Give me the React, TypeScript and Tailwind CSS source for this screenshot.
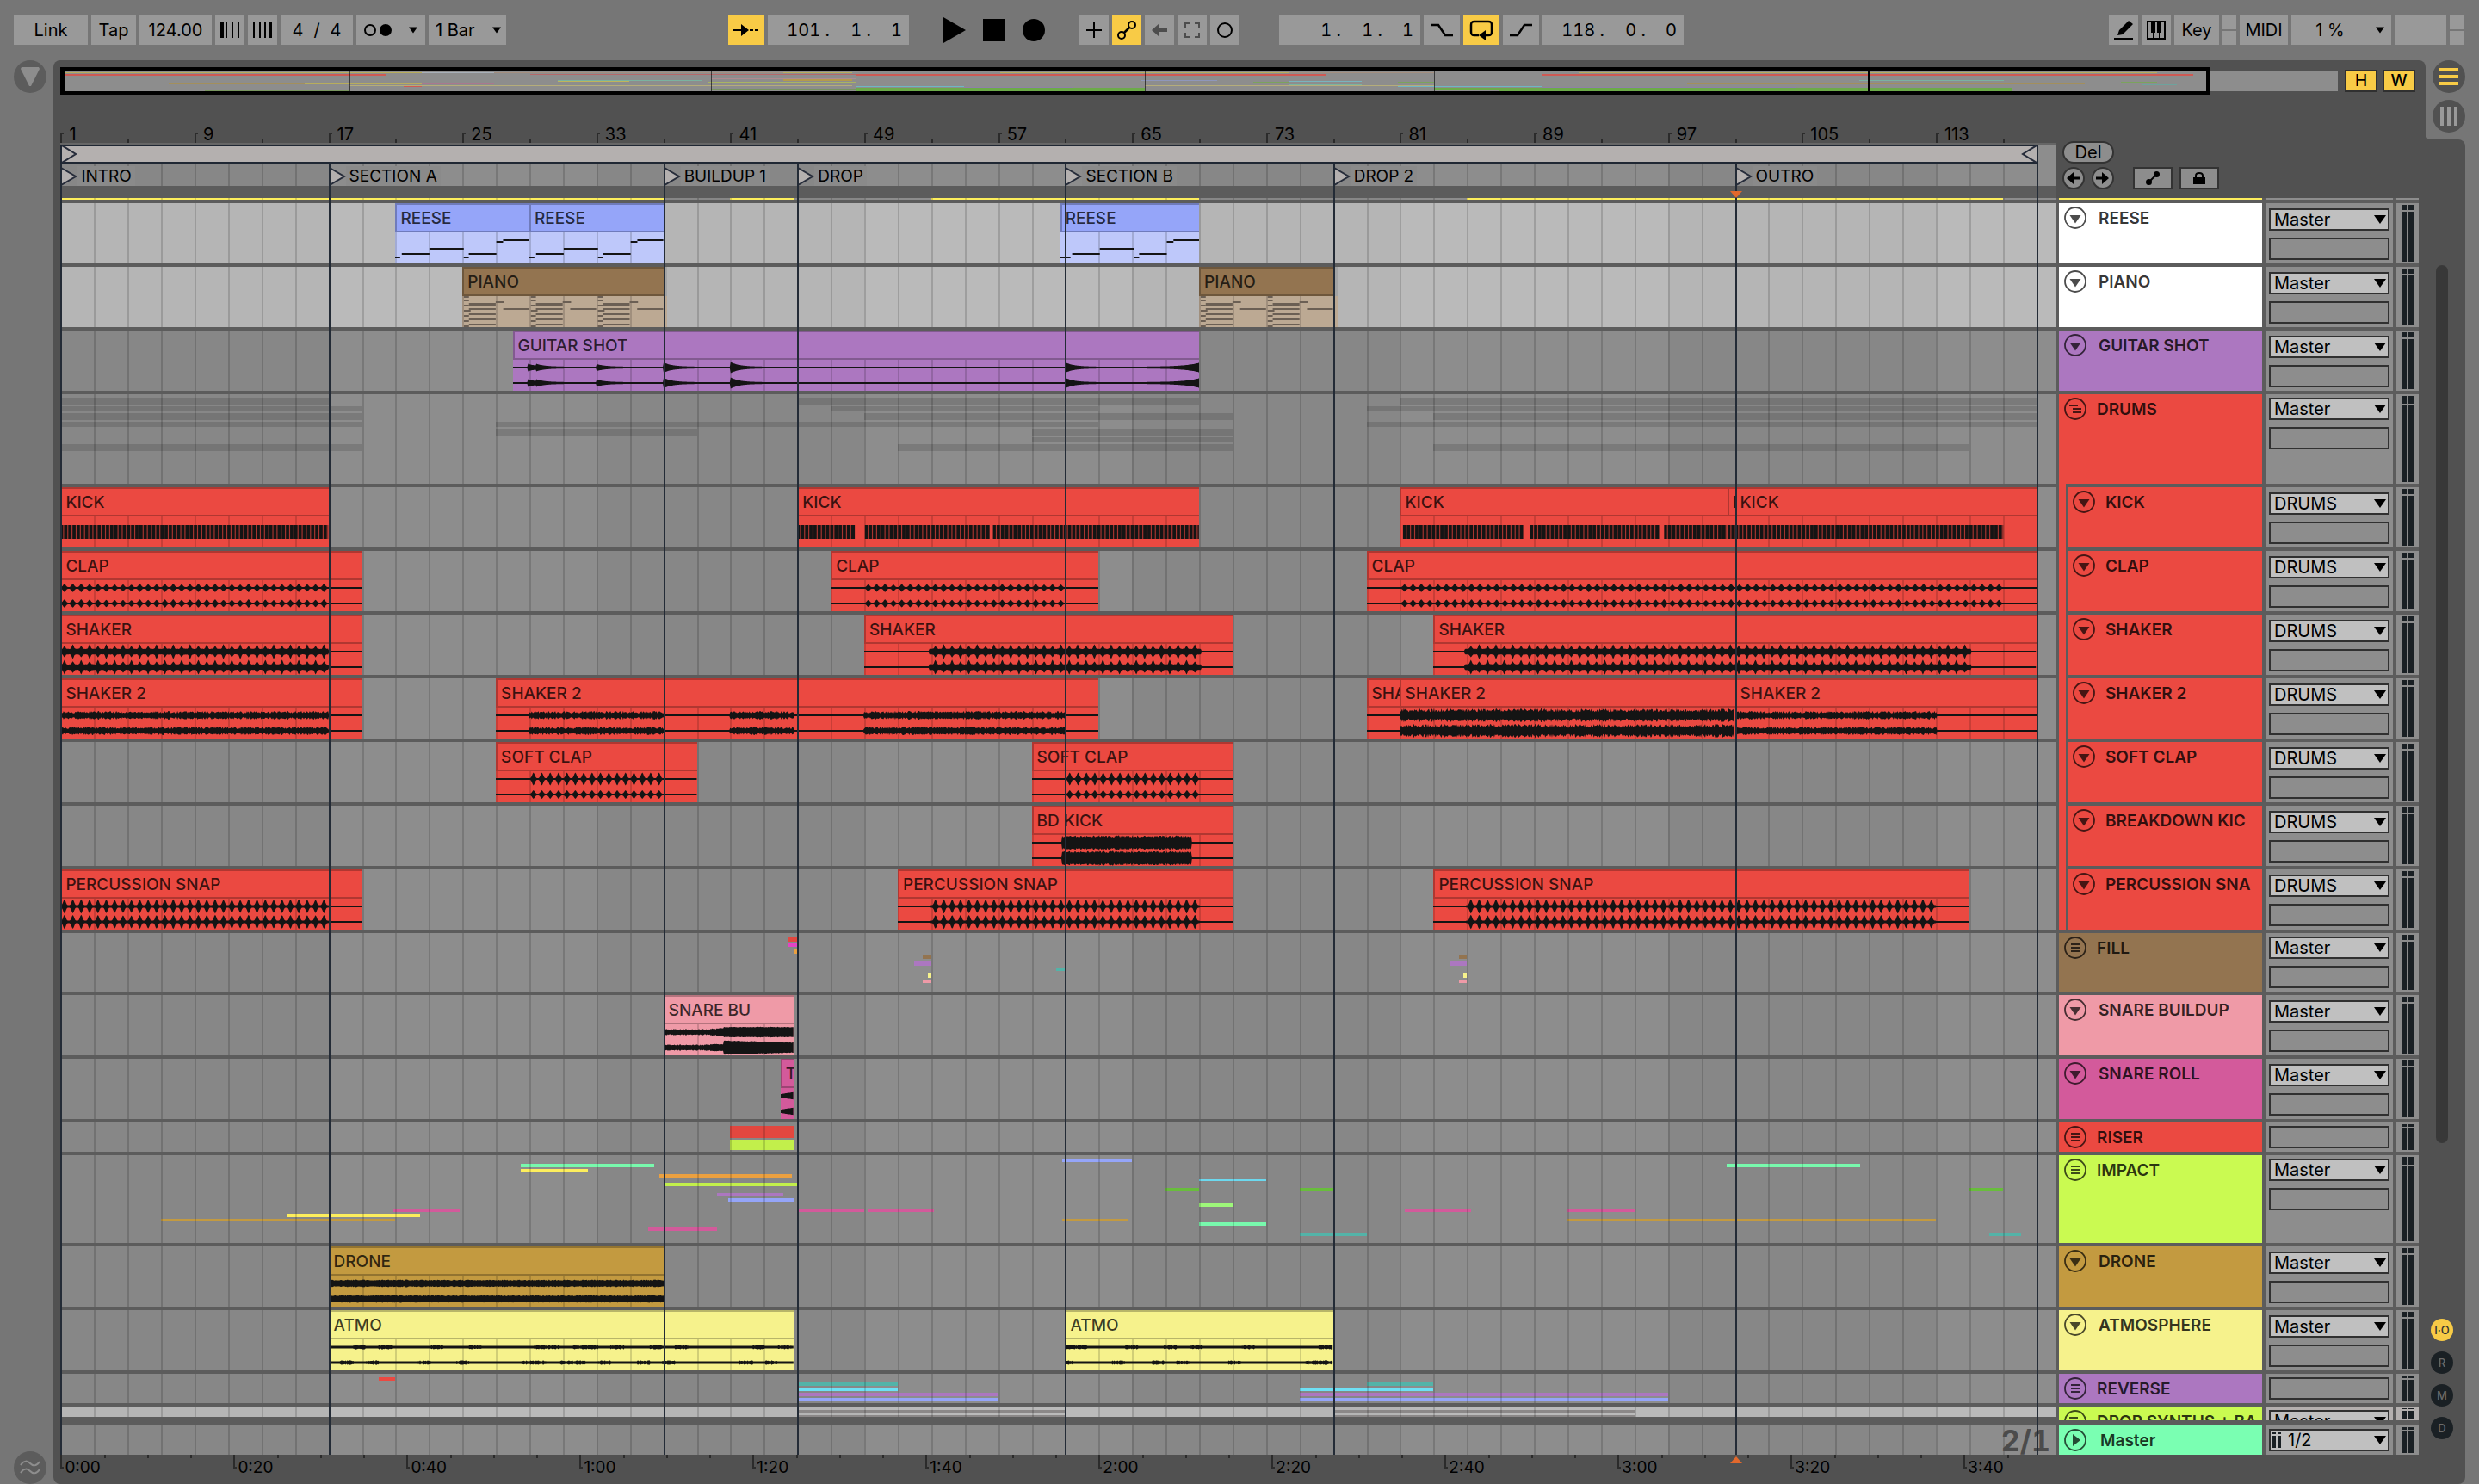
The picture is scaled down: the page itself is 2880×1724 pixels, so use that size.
import { useState } from 'react';
import type { ReactNode } from 'react';
import clsx from 'clsx';

// Timeline maths: everything on the arrangement is placed in bars.
const VIEW_START = 0.98;
const VIEW_BARS = 119.17;
const GRID = Array.from({ length: 59 }, (_, i) => 1 + (i + 1) * 2);
const SHADES = [17, 49, 81, 113];

const pos = (bar: number) => `${((bar - VIEW_START) / VIEW_BARS) * 100}%`;
const len = (bars: number) => `${(bars / VIEW_BARS) * 100}%`;

type WaveKind =
  | 'kick'
  | 'clap'
  | 'shaker'
  | 'hat'
  | 'hatLoud'
  | 'soft'
  | 'bd'
  | 'snap'
  | 'build'
  | 'roll'
  | 'drone'
  | 'atmo'
  | 'guitar';

type ClipData = {
  name: string;
  from: number;
  to: number;
  kind?: WaveKind;
  waves?: [number, number][];
  notes?: 'reese' | 'piano';
  shift?: number;
};

type Bar = { from: number; to: number; y: number; h: number; color: string };

type ClipColors = { head: string; body: string; edge: string };

type Track = {
  name: string;
  color: string;
  height: string;
  icon: 'fold' | 'group' | 'open' | 'play';
  output?: string;
  nested?: boolean;
  selected?: boolean;
  clip?: ClipColors;
  clips?: ClipData[];
  bars?: Bar[];
};

const bar = (from: number, to: number, y: number, h: number, color: string): Bar => ({ from, to, y, h, color });

const RED = { head: 'bg-[#eb4941]', body: 'bg-[#eb4941]', edge: 'border-[#b03731]' };
const BLUE = { head: 'bg-[#95a5f9]', body: 'bg-[#bec8fa]', edge: 'border-[#6f7bbb]' };
const BROWN = { head: 'bg-[#937450]', body: 'bg-[#bca993]', edge: 'border-[#6e573c]' };
const PURPLE = { head: 'bg-[#ac77c0]', body: 'bg-[#ac77c0]', edge: 'border-[#825a90]' };
const PINK = { head: 'bg-[#ef9aa7]', body: 'bg-[#ef9aa7]', edge: 'border-[#b3737d]' };
const MAGENTA = { head: 'bg-[#d35a9b]', body: 'bg-[#d35a9b]', edge: 'border-[#9e4374]' };
const GOLD = { head: 'bg-[#c39a40]', body: 'bg-[#c39a40]', edge: 'border-[#927330]' };
const YELLOW = { head: 'bg-[#f6f28c]', body: 'bg-[#f6f28c]', edge: 'border-[#b8b569]' };

const SHADOW = '#00000022';

const TRACKS: Track[] = [
  {
    name: 'REESE',
    color: 'bg-white',
    height: 'h-[70px]',
    icon: 'fold',
    output: 'Master',
    selected: true,
    clip: BLUE,
    clips: [
      { name: 'REESE', from: 21, to: 29, notes: 'reese' },
      { name: 'REESE', from: 29, to: 37, notes: 'reese' },
      { name: 'REESE', from: 60.7, to: 69, notes: 'reese', shift: 0.3 },
    ],
  },
  {
    name: 'PIANO',
    color: 'bg-white',
    height: 'h-[70px]',
    icon: 'fold',
    output: 'Master',
    selected: true,
    clip: BROWN,
    clips: [
      { name: 'PIANO', from: 25, to: 37, notes: 'piano' },
      { name: 'PIANO', from: 69, to: 77, notes: 'piano' },
    ],
    bars: [
      bar(37, 37.25, 0, 34, '#a3a3a3'),
      bar(37, 37.25, 34, 36, '#bca993'),
      bar(77, 77.35, 0, 34, '#a3a3a3'),
      bar(77, 77.35, 34, 36, '#bca993'),
    ],
  },
  {
    name: 'GUITAR SHOT',
    color: 'bg-[#ac77c0]',
    height: 'h-[70px]',
    icon: 'fold',
    output: 'Master',
    clip: PURPLE,
    clips: [{ name: 'GUITAR SHOT', from: 28, to: 69, kind: 'guitar', waves: [[28, 69]] }],
  },
  {
    name: 'DRUMS',
    color: 'bg-[#eb4941]',
    height: 'h-[104px]',
    icon: 'open',
    output: 'Master',
    bars: [
      bar(1, 17, 4, 8, SHADOW),
      bar(45, 69, 4, 8, SHADOW),
      bar(81, 119, 4, 8, SHADOW),
      bar(1, 19, 14, 6, SHADOW),
      bar(47, 63, 14, 6, SHADOW),
      bar(79, 119, 14, 6, SHADOW),
      bar(1, 19, 22, 8, SHADOW),
      bar(49, 71, 22, 8, SHADOW),
      bar(83, 119, 22, 8, SHADOW),
      bar(1, 19, 32, 6, SHADOW),
      bar(27, 63, 32, 6, SHADOW),
      bar(79, 119, 32, 6, SHADOW),
      bar(27, 39, 40, 8, SHADOW),
      bar(59, 71, 40, 8, SHADOW),
      bar(59, 71, 50, 6, SHADOW),
      bar(1, 19, 58, 8, SHADOW),
      bar(51, 71, 58, 8, SHADOW),
      bar(83, 115, 58, 8, SHADOW),
    ],
  },
  {
    name: 'KICK',
    color: 'bg-[#eb4941]',
    height: 'h-[70px]',
    icon: 'fold',
    output: 'DRUMS',
    nested: true,
    clip: RED,
    clips: [
      { name: 'KICK', from: 1, to: 17, kind: 'kick', waves: [[1, 17]] },
      { name: 'KICK', from: 45, to: 69, kind: 'kick', waves: [[45, 48.45], [49.05, 56.5], [56.7, 69]] },
      { name: 'KICK', from: 81, to: 100.55, kind: 'kick', waves: [[81.2, 88.45], [88.8, 96.5], [96.8, 100.55]] },
      { name: 'KICK', from: 100.55, to: 101, kind: 'kick', waves: [[100.55, 101]] },
      { name: 'KICK', from: 101, to: 119, kind: 'kick', waves: [[101, 117]] },
    ],
  },
  {
    name: 'CLAP',
    color: 'bg-[#eb4941]',
    height: 'h-[70px]',
    icon: 'fold',
    output: 'DRUMS',
    nested: true,
    clip: RED,
    clips: [
      { name: 'CLAP', from: 1, to: 19, kind: 'clap', waves: [[1, 17]] },
      { name: 'CLAP', from: 47, to: 63, kind: 'clap', waves: [[49, 61]] },
      { name: 'CLAP', from: 79, to: 119, kind: 'clap', waves: [[81, 117]] },
    ],
  },
  {
    name: 'SHAKER',
    color: 'bg-[#eb4941]',
    height: 'h-[70px]',
    icon: 'fold',
    output: 'DRUMS',
    nested: true,
    clip: RED,
    clips: [
      { name: 'SHAKER', from: 1, to: 19, kind: 'shaker', waves: [[1, 17]] },
      { name: 'SHAKER', from: 49, to: 71, kind: 'shaker', waves: [[52.9, 69.1]] },
      { name: 'SHAKER', from: 83, to: 119, kind: 'shaker', waves: [[84.9, 115.1]] },
    ],
  },
  {
    name: 'SHAKER 2',
    color: 'bg-[#eb4941]',
    height: 'h-[70px]',
    icon: 'fold',
    output: 'DRUMS',
    nested: true,
    clip: RED,
    clips: [
      { name: 'SHAKER 2', from: 1, to: 19, kind: 'hat', waves: [[1, 17]] },
      { name: 'SHAKER 2', from: 27, to: 63, kind: 'hat', waves: [[29, 37], [41, 44.8], [49, 61]] },
      { name: 'SHAKER 2', from: 79, to: 81, kind: 'hat', waves: [] },
      { name: 'SHAKER 2', from: 81, to: 101, kind: 'hatLoud', waves: [[81, 101]] },
      { name: 'SHAKER 2', from: 101, to: 119, kind: 'hat', waves: [[101, 113]] },
    ],
  },
  {
    name: 'SOFT CLAP',
    color: 'bg-[#eb4941]',
    height: 'h-[70px]',
    icon: 'fold',
    output: 'DRUMS',
    nested: true,
    clip: RED,
    clips: [
      { name: 'SOFT CLAP', from: 27, to: 39, kind: 'soft', waves: [[29, 37]] },
      { name: 'SOFT CLAP', from: 59, to: 71, kind: 'soft', waves: [[61, 69]] },
    ],
  },
  {
    name: 'BREAKDOWN KIC',
    color: 'bg-[#eb4941]',
    height: 'h-[70px]',
    icon: 'fold',
    output: 'DRUMS',
    nested: true,
    clip: RED,
    clips: [{ name: 'BD KICK', from: 59, to: 71, kind: 'bd', waves: [[60.8, 68.5]] }],
  },
  {
    name: 'PERCUSSION SNA',
    color: 'bg-[#eb4941]',
    height: 'h-[70px]',
    icon: 'fold',
    output: 'DRUMS',
    nested: true,
    clip: RED,
    clips: [
      { name: 'PERCUSSION SNAP', from: 1, to: 19, kind: 'snap', waves: [[1, 17]] },
      { name: 'PERCUSSION SNAP', from: 51, to: 71, kind: 'snap', waves: [[53, 69]] },
      { name: 'PERCUSSION SNAP', from: 83, to: 115, kind: 'snap', waves: [[85, 113]] },
    ],
  },
  {
    name: 'FILL',
    color: 'bg-[#937450]',
    height: 'h-[68px]',
    icon: 'group',
    output: 'Master',
    bars: [
      bar(44.45, 44.97, 4, 6, '#e3473f'),
      bar(44.45, 44.97, 12, 4, '#e344c4'),
      bar(44.77, 44.97, 18, 6, '#eba03f'),
      bar(52.5, 53, 26, 4, '#937450'),
      bar(52, 53, 32, 6, '#ac77c0'),
      bar(60.45, 61, 40, 4, '#53b3a8'),
      bar(52.8, 53, 46, 6, '#f6f28c'),
      bar(52.5, 53, 54, 4, '#ef9aa7'),
      bar(84.5, 85, 26, 4, '#937450'),
      bar(84, 85, 32, 6, '#ac77c0'),
      bar(84.8, 85, 46, 6, '#f6f28c'),
      bar(84.5, 85, 54, 4, '#ef9aa7'),
    ],
  },
  {
    name: 'SNARE BUILDUP',
    color: 'bg-[#ef9aa7]',
    height: 'h-[70px]',
    icon: 'fold',
    output: 'Master',
    clip: PINK,
    clips: [{ name: 'SNARE BU', from: 37, to: 44.77, kind: 'build', waves: [[37, 44.77]] }],
  },
  {
    name: 'SNARE ROLL',
    color: 'bg-[#d35a9b]',
    height: 'h-[70px]',
    icon: 'fold',
    output: 'Master',
    clip: MAGENTA,
    clips: [{ name: 'T', from: 44, to: 44.77, kind: 'roll', waves: [[44, 44.77]] }],
  },
  {
    name: 'RISER',
    color: 'bg-[#eb4941]',
    height: 'h-[34px]',
    icon: 'group',
    bars: [bar(41, 44.77, 4, 14, '#e3473f'), bar(41, 44.77, 20, 12, '#c2ef4b')],
  },
  {
    name: 'IMPACT',
    color: 'bg-[#cafa51]',
    height: 'h-[102px]',
    icon: 'group',
    output: 'Master',
    bars: [
      bar(28.5, 36.45, 10, 4, '#78f9ad'),
      bar(28.5, 32.5, 16, 4, '#fdee5c'),
      bar(36.75, 44.7, 22, 4, '#eba040'),
      bar(37, 45, 32, 4, '#c2ef4b'),
      bar(40.2, 44.15, 44, 4, '#ac77c0'),
      bar(40.85, 44.77, 50, 4, '#95a5f9'),
      bar(20.85, 24.85, 62, 4, '#d35a9b'),
      bar(14.5, 22.45, 68, 4, '#fdee5c'),
      bar(7, 21, 74, 2, '#c39a40'),
      bar(36.1, 40.2, 84, 4, '#d35a9b'),
      bar(45, 49, 62, 4, '#d35a9b'),
      bar(49.2, 53.15, 62, 4, '#d35a9b'),
      bar(60.8, 65, 4, 4, '#95a5f9'),
      bar(69, 73, 28, 2, '#6cd8ee'),
      bar(67, 69, 38, 4, '#68bd3c'),
      bar(75, 77, 38, 4, '#68bd3c'),
      bar(69, 71, 56, 4, '#9ef77a'),
      bar(60.8, 64.8, 74, 2, '#c39a40'),
      bar(69, 73, 78, 4, '#78f9ad'),
      bar(75, 79, 90, 4, '#53b3a8'),
      bar(81.3, 85.25, 62, 4, '#d35a9b'),
      bar(91, 95, 62, 4, '#d35a9b'),
      bar(91, 113, 74, 2, '#c39a40'),
      bar(100.5, 108.5, 10, 4, '#78f9ad'),
      bar(115, 117, 38, 4, '#68bd3c'),
      bar(116.2, 118.1, 90, 4, '#53b3a8'),
    ],
  },
  {
    name: 'DRONE',
    color: 'bg-[#c39a40]',
    height: 'h-[70px]',
    icon: 'fold',
    output: 'Master',
    clip: GOLD,
    clips: [{ name: 'DRONE', from: 17, to: 37, kind: 'drone', waves: [[17, 37]] }],
  },
  {
    name: 'ATMOSPHERE',
    color: 'bg-[#f6f28c]',
    height: 'h-[70px]',
    icon: 'fold',
    output: 'Master',
    clip: YELLOW,
    clips: [
      { name: 'ATMO', from: 17, to: 44.77, kind: 'atmo', waves: [[17, 44.77]] },
      { name: 'ATMO', from: 61, to: 77, kind: 'atmo', waves: [[61, 77]] },
    ],
  },
  {
    name: 'REVERSE',
    color: 'bg-[#ac77c0]',
    height: 'h-[34px]',
    icon: 'group',
    bars: [
      bar(20, 21, 4, 4, '#eb4941'),
      bar(45, 51, 10, 4, '#53b3a8'),
      bar(45, 51, 16, 4, '#6ee0f5'),
      bar(45, 57, 22, 4, '#ac77c0'),
      bar(45, 57, 28, 4, '#95a5f9'),
      bar(79, 83, 10, 4, '#53b3a8'),
      bar(75, 83, 16, 4, '#6ee0f5'),
      bar(75, 97, 22, 4, '#ac77c0'),
      bar(75, 97, 28, 4, '#95a5f9'),
    ],
  },
];

const LOCATORS = [
  { bar: 1, name: 'INTRO' },
  { bar: 17, name: 'SECTION A' },
  { bar: 37, name: 'BUILDUP 1' },
  { bar: 45, name: 'DROP' },
  { bar: 61, name: 'SECTION B' },
  { bar: 77, name: 'DROP 2' },
  { bar: 101, name: 'OUTRO' },
];

const OVERVIEW: Bar[] = [
  bar(17, 37, 0, 1, '#a8c062'),
  bar(37, 119, 0, 1, '#8fb27a'),
  bar(1, 21, 2, 1, '#b8ad5c'),
  bar(21, 25, 2, 1, '#a9b0b8'),
  bar(25, 41, 2, 1, '#a38f80'),
  bar(41, 44.8, 2, 1, '#b8ad5c'),
  bar(53, 69, 2, 1, '#b8ad5c'),
  bar(69, 77, 2, 1, '#a38f80'),
  bar(85, 117, 2, 1, '#b8ad5c'),
  bar(1, 19, 4, 2, '#cf5a54'),
  bar(27, 45, 4, 1, '#b5686a'),
  bar(45, 71, 4, 2, '#cf5a54'),
  bar(83, 119, 4, 2, '#cf5a54'),
  bar(37, 45, 9, 1, '#b08a90'),
  bar(41, 44.8, 10, 2, '#b59a4c'),
  bar(28.5, 36.5, 11, 1, '#7bb3a0'),
  bar(28.5, 32.5, 12, 1, '#c0b45a'),
  bar(36.8, 45, 13, 1, '#a9b562'),
  bar(60.8, 65, 11, 1, '#8f97bb'),
  bar(69, 73, 12, 1, '#79b5bf'),
  bar(69, 71, 14, 1, '#8fc07a'),
  bar(69, 73, 16, 1, '#7bb3a0'),
  bar(67, 69, 13, 1, '#7ba35c'),
  bar(75, 77, 13, 1, '#7ba35c'),
  bar(115, 117, 13, 1, '#7ba35c'),
  bar(100.5, 108.5, 11, 1, '#7bb3a0'),
  bar(116.2, 118.1, 16, 1, '#6da39d'),
  bar(41, 44.8, 14, 1, '#8f97bb'),
  bar(7, 21, 15, 1, '#a38f5c'),
  bar(14.5, 22.5, 15, 1, '#b8ad5c'),
  bar(21, 25, 15, 1, '#a8788f'),
  bar(91, 113, 15, 1, '#a38f5c'),
  bar(17, 44.8, 17, 1, '#b5ad7a'),
  bar(61, 77, 17, 1, '#b5ad7a'),
  bar(20, 21, 18, 1, '#cf5a54'),
  bar(45, 51, 18, 1, '#6fb7c4'),
  bar(51, 57, 19, 1, '#8f80a8'),
  bar(75, 83, 18, 1, '#6fb7c4'),
  bar(83, 97, 19, 1, '#8f80a8'),
  bar(9, 17, 23, 1, '#78945f'),
  bar(37, 45, 21, 1, '#78945f'),
  bar(45, 61, 20, 4, '#6cab49'),
  bar(77, 80.6, 20, 2, '#6cab49'),
  bar(80.6, 109, 20, 4, '#6cab49'),
];

const noise = (n: number) => {
  const v = Math.sin(n * 127.1) * 43758.5453;
  return v - Math.floor(v);
};

const hit = (b: number, at: number, size: number) => (b < at ? 0 : size * Math.exp((at - b) * 1.9));

// Half-height of a wave form at a given bar, in pixels.
function amplitude(kind: WaveKind, b: number, channel: number) {
  const phase = (b * 2) % 1;
  const pulse = Math.exp(-(((phase - 0.5) / 0.2) ** 2));
  const sharp = Math.exp(-(((phase - 0.5) / 0.15) ** 2));
  const beat = Math.floor(b * 2);
  const n = noise(Math.round(b * 20) + channel * 7);
  switch (kind) {
    case 'clap':
      return 1 + pulse * (2.8 + noise(beat) * 1.2);
    case 'shaker':
      return 3 + sharp * ((beat + channel) % 2 ? 5.4 : 3.4) + n * 0.4;
    case 'hat':
      return 2.2 + n * 2.8;
    case 'hatLoud':
      return 3.6 + n * 4.4;
    case 'soft':
      return 1 + pulse * (channel ? 4 : 6.6);
    case 'bd':
      return 6 + n * 2.4;
    case 'snap':
      return 1.4 + pulse * (6 + noise(beat));
    case 'build':
      return b < 40.6 ? 2.4 + n * 1.4 + Math.max(0, b - 39.5) : (channel ? 7.6 - (b - 40.6) * 0.5 : 5.4) + n * 0.8;
    case 'roll':
      return 2 + (b - 44) * 3;
    case 'drone':
      return 3.2 + n * 1.2;
    case 'atmo':
      return 1.4 + (noise(Math.floor(b * 1.3) + channel) > 0.6 ? 1.3 : 0.2) * n;
    case 'guitar':
      return (
        1 +
        Math.max(
          hit(b, 28.9, 3.4),
          hit(b, 29.4, 3.4),
          hit(b, 33, 3),
          hit(b, 37, 5),
          hit(b, 41, 5.4),
          hit(b, 61, 5),
          b > 65 ? 4.6 * Math.exp((b - 69) * 1.1) : 0,
        )
      );
    default:
      return 1;
  }
}

function wavePath(clip: ClipData, channel: number) {
  const mid = channel ? 27 : 9;
  const steps = Math.round((clip.to - clip.from) * 20);
  const top: string[] = [];
  const bottom: string[] = [];
  for (let i = 0; i <= steps; i++) {
    const b = clip.from + i / 20;
    const on = clip.waves?.some(([from, to]) => b >= from && b <= to);
    const a = on ? amplitude(clip.kind!, b, channel) : 1;
    top.push(`${i} ${(mid - a).toFixed(1)}`);
    bottom.unshift(`${i} ${(mid + a).toFixed(1)}`);
  }
  return `M${top.join('L')}L${bottom.join('L')}Z`;
}

const REESE_NOTES = [
  [0.1, 0.4, 28],
  [0.4, 2.05, 24],
  [2.05, 4.1, 18],
  [4.1, 4.4, 28],
  [4.4, 6.05, 24],
  [6.05, 6.45, 10],
  [6.45, 8, 8],
];

const PIANO_NOTES = [
  [0.1, 0.4, 0],
  [0.1, 0.4, 4],
  [2, 2.5, 6],
  [0.4, 2, 8],
  [0.4, 2, 10],
  [0.1, 0.4, 10],
  [0.4, 2, 14],
  [2.45, 4, 14],
  [0.1, 0.5, 16],
  [0.4, 2, 20],
  [0.1, 0.4, 22],
  [0.4, 2, 26],
  [0.1, 0.4, 28],
  [0.4, 2, 32],
  [0.1, 0.4, 34],
];

function ClipDrawing({ clip }: { clip: ClipData }) {
  const bars = clip.to - clip.from;
  const width = bars * 20;
  let content: ReactNode = null;

  if (clip.notes === 'reese') {
    const shift = clip.shift ?? 0;
    content = REESE_NOTES.map(([from, to, y], i) => (
      <rect key={i} x={(i ? from + shift : 0) * 20} y={y} width={(to - from + (i ? 0 : shift)) * 20} height={2} fill="#141414" />
    ));
  } else if (clip.notes === 'piano') {
    const repeats = Array.from({ length: bars / 4 }, (_, i) => i * 4);
    content = repeats.map((start) =>
      PIANO_NOTES.map(([from, to, y], i) => (
        <rect key={`${start}-${i}`} x={(start + from) * 20} y={y} width={(to - from) * 20} height={2} fill="#6b5f54" />
      )),
    );
  } else if (clip.kind === 'kick') {
    content = clip.waves?.map(([from, to]) => {
      const hits = Array.from({ length: Math.floor((to - from) * 4) }, (_, i) => i);
      return (
        <g key={from}>
          <rect x={(from - clip.from) * 20} y={10} width={(to - from) * 20} height={16} fill="#141414" />
          {hits.map((h) => (
            <rect key={h} x={(from - clip.from) * 20 + h * 5 + 3.4} y={10} width={1.2} height={16} fill="#a83530" />
          ))}
        </g>
      );
    });
  } else {
    content = (
      <>
        <path d={wavePath(clip, 0)} fill="#141414" />
        <path d={wavePath(clip, 1)} fill="#141414" />
      </>
    );
  }

  return (
    <svg viewBox={`0 0 ${width} 36`} preserveAspectRatio="none" className="relative z-20 block h-9 w-full">
      {content}
    </svg>
  );
}

function Clip({ clip, colors }: { clip: ClipData; colors: ClipColors }) {
  return (
    <div className="absolute inset-y-0 overflow-hidden" style={{ left: pos(clip.from), width: len(clip.to - clip.from) }}>
      <div
        className={clsx(
          'relative z-20 h-[34px] overflow-hidden border-y-2 border-l-2 pl-1 text-[19px] leading-8 font-medium whitespace-nowrap text-black/75',
          colors.head,
          colors.edge,
        )}
      >
        {clip.name}
      </div>
      <div className={clsx('h-9', colors.body)}>
        <ClipDrawing clip={clip} />
      </div>
    </div>
  );
}

function Grid() {
  return (
    <>
      {GRID.map((b) => (
        <div key={b} className="absolute inset-y-0 z-10 w-0.5 bg-black/15" style={{ left: pos(b) }} />
      ))}
    </>
  );
}

function Lane({ className, light, children }: { className?: string; light?: boolean; children?: ReactNode }) {
  return (
    <div className={clsx('relative min-w-0 flex-1 overflow-hidden', light ? 'bg-[#b5b5b5]' : 'bg-[#878787]', className)}>
      {SHADES.map((b) => (
        <div
          key={b}
          className={clsx('absolute inset-y-0', light ? 'bg-[#bababa]' : 'bg-[#8d8d8d]')}
          style={{ left: pos(b), width: len(16) }}
        />
      ))}
      {children}
      <Grid />
    </div>
  );
}

function Strips({ items }: { items: Bar[] }) {
  return (
    <>
      {items.map((s, i) => (
        <div
          key={i}
          className="absolute"
          style={{ left: pos(s.from), width: len(s.to - s.from), top: s.y, height: s.h, background: s.color }}
        />
      ))}
    </>
  );
}

function TrackIcon({ type }: { type: Track['icon'] }) {
  return (
    <svg viewBox="0 0 26 26" className="size-[26px] shrink-0 text-black/70" fill="none" stroke="currentColor" strokeWidth={2}>
      <circle cx={13} cy={13} r={12} strokeWidth={1.8} />
      {type === 'fold' && <path d="M6.500 10h13L13 19.500z" fill="currentColor" stroke="none" />}
      {type === 'play' && <path d="M10 6v14l9-7z" fill="currentColor" stroke="none" />}
      {type === 'group' && <path d="M8 9h10M8 13h10M8 17h10" />}
      {type === 'open' && <path d="M6 9h10M10 13h10M10 17h10" />}
    </svg>
  );
}

function TrackName({ children }: { children: ReactNode }) {
  return <span className="text-[19px] leading-7 font-semibold whitespace-nowrap text-black/80">{children}</span>;
}

function Caret({ className }: { className: string }) {
  return (
    <svg viewBox="0 0 14 10" className={clsx('pointer-events-none', className)}>
      <path d="M0 0h14L7 10z" fill="#000" />
    </svg>
  );
}

function OutputSelect({ label, value, indent }: { label: string; value: string; indent?: boolean }) {
  return (
    <div className="relative">
      <select
        aria-label={label}
        defaultValue={value}
        className={clsx(
          'block h-[26px] w-full appearance-none border-2 border-[#303030] bg-[#c0c0c0] text-[20px] leading-[22px] text-black',
          indent ? 'pl-5' : 'pl-1',
        )}
      >
        <option>{value}</option>
      </select>
      {indent && (
        <svg viewBox="0 0 10 18" className="pointer-events-none absolute top-1 left-1 h-[18px] w-2.5" fill="#1a2024">
          <path d="M0 0h4v2H0zM6 0h4v2H6zM0 4h4v14H0zM6 4h4v14H6z" />
        </svg>
      )}
      <Caret className="absolute top-2 right-1 h-2.5 w-3.5" />
    </div>
  );
}

function Meter() {
  return (
    <div className="flex h-full gap-0.5 px-1.5 py-0.5">
      {[0, 1].map((i) => (
        <div key={i} className="flex flex-1 flex-col gap-0.5">
          <div className="h-[9%] shrink-0 bg-[#1a2024]" />
          <div className="flex-1 bg-[#1a2024]" />
        </div>
      ))}
    </div>
  );
}

function TrackRow({ track }: { track: Track }) {
  const regular = track.height === 'h-[70px]';
  return (
    <div className={clsx('mb-1 flex gap-1', track.height)}>
      <Lane light={track.selected}>
        {track.bars && <Strips items={track.bars} />}
        {track.clips?.map((c) => (
          <Clip key={c.from} clip={c} colors={track.clip!} />
        ))}
      </Lane>
      <div className="flex w-[236px] shrink-0">
        {track.nested && <div className="-mt-1 mr-0.5 w-2 bg-[#eb4941]" />}
        <div
          className={clsx(
            'flex min-w-0 flex-1 items-start overflow-hidden pt-1 pl-1.5',
            track.icon === 'fold' && !track.nested ? 'gap-3.5' : 'gap-3',
            track.color,
          )}
        >
          <TrackIcon type={track.icon} />
          <TrackName>{track.name}</TrackName>
        </div>
      </div>
      <div className={clsx('flex w-[148px] shrink-0 flex-col gap-2 bg-[#8d8d8d] px-1', regular ? 'pt-1.5' : 'pt-1')}>
        {track.output && <OutputSelect label={`${track.name} output`} value={track.output} />}
        <input aria-label={`${track.name} channel`} className="h-[26px] w-full border-2 border-[#303030]" />
      </div>
      <div className="w-[26px] shrink-0 bg-[#8d8d8d]">
        <Meter />
      </div>
    </div>
  );
}

function BarButton({ label, className, active, children }: { label?: string; className: string; active?: boolean; children?: ReactNode }) {
  return (
    <button
      aria-label={label}
      className={clsx('flex h-[34px] shrink-0 items-center justify-center', active ? 'bg-[#f8cb46]' : 'bg-[#999999]', className)}
    >
      {children}
    </button>
  );
}

function Position({ label, values }: { label: string; values: [string, string, string] }) {
  return (
    <button aria-label={label} className="flex h-[34px] w-[164px] shrink-0 items-center justify-end bg-[#999999] pr-2 tabular-nums">
      <span>{values[0]} .</span>
      <span className="w-12 text-right">{values[1]} .</span>
      <span className="w-9 text-right">{values[2]}</span>
    </button>
  );
}

function Split() {
  return (
    <div className="flex h-[34px] w-4 flex-col gap-0.5">
      <div className="flex-1 bg-[#999999]" />
      <div className="flex-1 bg-[#999999]" />
    </div>
  );
}

function Toolbar() {
  return (
    <header className="flex items-center px-4 py-[18px] text-[20px] text-black">
      <div className="flex gap-1">
        <BarButton className="w-[86px]">Link</BarButton>
        <BarButton className="w-[52px]">Tap</BarButton>
        <BarButton className="w-[84px]">124.00</BarButton>
        <BarButton label="Nudge down" className="w-[34px]">
          <svg viewBox="0 0 22 18" className="h-[18px] w-[22px]">
            <path d="M0 0h4v18H0zM6 0h2v18H6zM13 0h2v18h-2zM20 0h2v18h-2z" />
          </svg>
        </BarButton>
        <BarButton label="Nudge up" className="w-[34px]">
          <svg viewBox="0 0 22 18" className="h-[18px] w-[22px]">
            <path d="M0 0h2v18H0zM7 0h2v18H7zM13 0h2v18h-2zM18 0h4v18h-4z" />
          </svg>
        </BarButton>
        <BarButton className="w-[84px] gap-3">
          <span>4</span>
          <span>/</span>
          <span>4</span>
        </BarButton>
        <BarButton label="Metronome" className="w-20 gap-5">
          <svg viewBox="0 0 32 14" className="h-3.5 w-8">
            <circle cx={7} cy={7} r={6} fill="none" stroke="#000" strokeWidth={2} />
            <circle cx={25} cy={7} r={7} />
          </svg>
          <Caret className="h-2 w-2.5" />
        </BarButton>
        <div className="relative">
          <select aria-label="Quantization" className="block h-[34px] w-[90px] appearance-none bg-[#999999] pl-2">
            <option>1 Bar</option>
          </select>
          <Caret className="absolute top-[13px] right-1.5 h-2 w-2.5" />
        </div>
      </div>

      <div className="ml-[258px] flex gap-1">
        <BarButton label="Follow" active className="w-[42px]">
          <svg viewBox="0 0 30 16" className="h-4 w-[30px]">
            <path d="M0 7h9V1l9 7-9 7V9H0zM19 7h4v2h-4zM25 7h4v2h-4z" />
          </svg>
        </BarButton>
        <Position label="Arrangement position" values={['101', '1', '1']} />
      </div>

      <div className="ml-10 flex h-[34px] items-center gap-5">
        <button aria-label="Play">
          <svg viewBox="0 0 26 30" className="h-[30px] w-[26px]">
            <path d="M0 0v30l26-15z" />
          </svg>
        </button>
        <button aria-label="Stop" className="size-[26px] bg-black" />
        <button aria-label="Record" className="size-[26px] rounded-full bg-black" />
      </div>

      <div className="ml-10 flex gap-1">
        <BarButton label="Overdub" className="w-[34px]">
          <svg viewBox="0 0 18 18" className="size-[18px]">
            <path d="M8 0h2v8h8v2h-8v8H8v-8H0V8h8z" />
          </svg>
        </BarButton>
        <BarButton label="Automation arm" active className="w-[34px]">
          <svg viewBox="0 0 22 22" className="size-[22px]" fill="none" stroke="#000" strokeWidth={2}>
            <circle cx={5} cy={17} r={4} />
            <circle cx={17} cy={5} r={4} />
            <path d="M8 14l6-6" strokeWidth={2.500} />
          </svg>
        </BarButton>
        <BarButton label="Re-enable automation" className="w-[34px]">
          <svg viewBox="0 0 18 16" className="h-4 w-[18px]" fill="#4d4d4d">
            <path d="M0 8l9-8v6h9v4H9v6z" />
          </svg>
        </BarButton>
        <BarButton label="Capture" className="w-[34px]">
          <svg viewBox="0 0 18 18" className="size-[18px]" fill="none" stroke="#4d4d4d" strokeWidth={2}>
            <path d="M1 6V1h5M12 1h5v5M17 12v5h-5M6 17H1v-5" />
          </svg>
        </BarButton>
        <BarButton label="Session record" className="w-[34px]">
          <svg viewBox="0 0 18 18" className="size-[18px]" fill="none" stroke="#000" strokeWidth={2}>
            <circle cx={9} cy={9} r={8} />
          </svg>
        </BarButton>
      </div>

      <div className="ml-[46px] flex gap-1">
        <Position label="Loop start" values={['1', '1', '1']} />
        <BarButton label="Punch in" className="w-[42px]">
          <svg viewBox="0 0 28 16" className="h-4 w-7" fill="none" stroke="#000" strokeWidth={2.500}>
            <path d="M1 2h9l8 12h9" />
          </svg>
        </BarButton>
        <BarButton label="Loop" active className="w-[42px]">
          <svg viewBox="0 0 28 24" className="h-6 w-7" fill="none" stroke="#000" strokeWidth={2.500}>
            <path d="M11 18H6c-3 0-4-1-4-4V6c0-3 1-4 4-4h16c3 0 4 1 4 4v8c0 3-1 4-4 4h-4" />
            <path d="M19 12v12l-8-6z" fill="#000" stroke="none" />
          </svg>
        </BarButton>
        <BarButton label="Punch out" className="w-[42px]">
          <svg viewBox="0 0 28 16" className="h-4 w-7" fill="none" stroke="#000" strokeWidth={2.500}>
            <path d="M1 14h9l8-12h9" />
          </svg>
        </BarButton>
        <Position label="Loop length" values={['118', '0', '0']} />
      </div>

      <div className="ml-auto flex gap-1 pr-0.5">
        <BarButton label="Draw mode" className="w-[34px]">
          <svg viewBox="0 0 22 22" className="size-[22px]">
            <path d="M0 20h22v2H0zM4 17l2-6L17 0l5 4L10 16z" />
          </svg>
        </BarButton>
        <BarButton label="Computer keyboard" className="w-[34px]">
          <svg viewBox="0 0 22 22" className="size-[22px]">
            <path d="M1 1h20v20H1z" fill="none" stroke="#000" strokeWidth={2} />
            <path d="M5 1h5v13H5zM12 1h5v13h-5zM7 14h1v7H7zM14 14h1v7h-1z" />
          </svg>
        </BarButton>
        <BarButton className="w-[52px]">Key</BarButton>
        <Split />
        <BarButton className="w-14">MIDI</BarButton>
        <BarButton className="w-[116px] gap-9 pl-5">
          <span>1 %</span>
          <Caret className="h-2 w-2.5" />
        </BarButton>
        <div className="h-[34px] w-[60px] bg-[#999999]" />
        <Split />
      </div>
    </header>
  );
}

function Overview() {
  const at = (b: number) => `${((b - 1) / 126) * 100}%`;
  return (
    <div className="flex items-center pr-3">
      <div className="relative h-8 flex-1 py-1">
        <div className="relative h-6 bg-[#8d8d8d]">
          {OVERVIEW.map((s, i) => (
            <div
              key={i}
              className="absolute"
              style={{ left: at(s.from), width: at(s.to - s.from + 1), top: s.y, height: s.h, background: s.color }}
            />
          ))}
          {LOCATORS.slice(1).map((l) => (
            <div key={l.bar} className={clsx('absolute inset-y-0', l.bar === 101 ? 'w-0.5 bg-black' : 'w-px bg-black/60')} style={{ left: at(l.bar) }} />
          ))}
        </div>
        <div className="absolute inset-y-0 left-0 border-x-[5px] border-y-4 border-black" style={{ width: at(119.95) }} />
      </div>
      <button className="ml-2 h-[26px] w-[38px] border-2 border-[#303030] bg-[#f8cb46] text-[19px] leading-[22px] font-medium">H</button>
      <button className="ml-1.5 h-[26px] w-[38px] border-2 border-[#303030] bg-[#f8cb46] text-[19px] leading-[22px] font-medium">W</button>
    </div>
  );
}

function BarRuler() {
  const minor = Array.from({ length: 15 }, (_, i) => 5 + i * 8);
  const major = Array.from({ length: 15 }, (_, i) => 1 + i * 8);
  return (
    <div className="relative h-[58px] overflow-hidden border-b-2 border-[#666666] text-[20px] leading-5">
      {major.map((b) => (
        <div key={b} className="absolute bottom-0 flex items-end" style={{ left: pos(b) }}>
          <div className="h-3 w-1 border-t-2 border-l-2 border-[#2b2b2b]" />
          <span className="pl-1.5">{b}</span>
        </div>
      ))}
      {minor.map((b) => (
        <div key={b} className="absolute bottom-0 h-1 w-0.5 bg-[#2b2b2b]" style={{ left: pos(b) }} />
      ))}
    </div>
  );
}

function TimeRuler() {
  const ticks = Array.from({ length: 46 }, (_, i) => i * 5);
  const toBar = (s: number) => 1 + (s * 31) / 60;
  return (
    <div className="relative h-[34px] text-[19px] leading-6">
      {ticks.map((s) =>
        s % 20 === 0 ? (
          <div key={s} className="absolute top-0 flex" style={{ left: pos(toBar(s)) }}>
            <div className="h-4 w-1 border-b-2 border-l-2 border-[#2b2b2b]" />
            <span className="pt-[3px] pl-px">{`${Math.floor(s / 60)}:${String(s % 60).padStart(2, '0')}`}</span>
          </div>
        ) : (
          <div key={s} className="absolute top-0 h-1 w-0.5 bg-[#2b2b2b]" style={{ left: pos(toBar(s)) }} />
        ),
      )}
      <svg viewBox="0 0 14 8" className="absolute top-0.5 -ml-1.5 h-2 w-3.5" style={{ left: pos(101) }}>
        <path d="M7 0l7 8H0z" fill="#e2682c" />
      </svg>
    </div>
  );
}

function LocatorRow() {
  return (
    <Lane className="h-[26px] flex-none">
      {LOCATORS.map((l) => (
        <button key={l.bar} className="absolute top-1 z-20 flex h-[22px] items-center" style={{ left: pos(l.bar) }}>
          <svg viewBox="0 0 20 22" className="h-[22px] w-5">
            <path d="M1 1l17 10L1 21z" fill="#b4b0af" stroke="#262c3a" strokeWidth={2} />
          </svg>
          <span className="bg-[#8a8a8a] px-1 text-[19px] leading-6 whitespace-nowrap text-black">{l.name}</span>
        </button>
      ))}
    </Lane>
  );
}

function LoopBrace() {
  return (
    <div className="relative h-[22px] bg-[#8d8d8d]">
      <div
        className="absolute inset-y-0 flex items-center justify-between border-2 border-[#1f2733] bg-[#b4b0af]"
        style={{ left: pos(1), width: len(118.1) }}
      >
        <svg viewBox="0 0 18 20" className="h-5 w-[18px]" fill="none" stroke="#262c3a" strokeWidth={2}>
          <path d="M0 0l16 10L0 20" />
        </svg>
        <svg viewBox="0 0 18 20" className="h-5 w-[18px]" fill="none" stroke="#262c3a" strokeWidth={2}>
          <path d="M18 0L2 10l16 10" />
        </svg>
      </div>
    </div>
  );
}

function LocatorControls() {
  const box = 'flex h-[26px] items-center justify-center border-2 border-[#333333] bg-[#8d8d8d]';
  return (
    <div className="w-[422px] shrink-0 pt-[54px] pl-2">
      <button className={clsx(box, 'w-[60px] rounded-full text-[20px]')}>Del</button>
      <div className="mt-1 flex">
        <button aria-label="Previous locator" className={clsx(box, 'w-[26px] rounded-full')}>
          <svg viewBox="0 0 16 14" className="h-3.5 w-4">
            <path d="M0 7l8-7v5.500h7v3H8V14z" />
          </svg>
        </button>
        <button aria-label="Next locator" className={clsx(box, 'ml-2 w-[26px] rounded-full')}>
          <svg viewBox="0 0 16 14" className="h-3.5 w-4">
            <path d="M15 7L7 0v5.500H0v3h7V14z" />
          </svg>
        </button>
        <button aria-label="Automation mode" className={clsx(box, 'ml-[22px] w-[46px]')}>
          <svg viewBox="0 0 16 16" className="size-4">
            <circle cx={3.500} cy={12.500} r={3.500} />
            <circle cx={12.500} cy={3.500} r={3.500} />
            <path d="M4 12l8-8" stroke="#000" strokeWidth={2} />
          </svg>
        </button>
        <button aria-label="Lock envelopes" className={clsx(box, 'ml-2 w-[46px]')}>
          <svg viewBox="0 0 14 14" className="size-3.5">
            <path d="M0 6h14v8H0z" />
            <path d="M3 7V4c0-4 8-4 8 0v3" fill="none" stroke="#000" strokeWidth={2} />
          </svg>
        </button>
      </div>
    </div>
  );
}

function Arrangement() {
  return (
    <div className="relative isolate">
      <div className="flex">
        <div className="min-w-0 flex-1">
          <BarRuler />
          <LoopBrace />
          <LocatorRow />
          <div className="h-3.5 bg-[#5c5c5c]" />
        </div>
        <LocatorControls />
      </div>

      <div className="bg-[#5c5c5c]">
        <div className="mb-1 flex h-0.5 gap-1">
          <Lane>
            <Strips
              items={[bar(1, 37, 0, 2, '#fdee5c'), bar(41, 44.77, 0, 2, '#fdee5c'), bar(53, 69, 0, 2, '#fdee5c'), bar(85, 117, 0, 2, '#fdee5c')]}
            />
          </Lane>
          <div className="w-[236px] bg-[#fdee5c]" />
          <div className="w-[148px] bg-[#8d8d8d]" />
          <div className="w-[26px] bg-[#8d8d8d]" />
        </div>

        {TRACKS.map((t) => (
          <TrackRow key={t.name} track={t} />
        ))}

        <div className="mb-1.5 flex h-4 gap-1">
          <Lane light className="h-3">
            <Strips items={[bar(45, 61, 4, 4, '#8b8888'), bar(45, 61, 10, 2, '#8b8888'), bar(77, 95, 4, 4, '#8b8888'), bar(77, 95, 10, 2, '#8b8888')]} />
          </Lane>
          <div className="flex w-[236px] gap-3 overflow-hidden bg-[#cafa51] pt-1 pl-1.5">
            <TrackIcon type="open" />
            <TrackName>DROP SYNTHS + BA</TrackName>
          </div>
          <div className="w-[148px] overflow-hidden bg-[#b4b0af] px-1 pt-1">
            <OutputSelect label="DROP SYNTHS output" value="Master" />
          </div>
          <div className="w-[26px] bg-[#b4b0af]">
            <Meter />
          </div>
        </div>

        <div className="flex h-[34px] gap-1">
          <Lane>
            <span className="absolute right-1.5 bottom-0 z-20 text-[34px] leading-8 font-bold text-[#4b4b4b] tabular-nums">2/1</span>
          </Lane>
          <div className="flex w-[236px] gap-4 bg-[#7affb2] pt-1 pl-1.5">
            <TrackIcon type="play" />
            <TrackName>Master</TrackName>
          </div>
          <div className="w-[148px] bg-[#8d8d8d] px-1 pt-1">
            <OutputSelect label="Master output" value="1/2" indent />
          </div>
          <div className="w-[26px] bg-[#8d8d8d]">
            <Meter />
          </div>
        </div>
      </div>

      <div className="pointer-events-none absolute top-[80px] right-[422px] bottom-0 left-0 z-30">
        {[...LOCATORS.map((l) => l.bar), 119].map((b) => (
          <div key={b} className="absolute inset-y-0 w-0.5 bg-[#232b36]" style={{ left: pos(b) }} />
        ))}
        <svg viewBox="0 0 14 8" className="absolute top-8 -ml-1.5 h-2 w-3.5" style={{ left: pos(101) }}>
          <path d="M0 0h14L7 8z" fill="#e2682c" />
        </svg>
      </div>
    </div>
  );
}

function RoundButton({ label, className, children }: { label: string; className?: string; children: ReactNode }) {
  return (
    <button aria-label={label} className={clsx('flex size-[38px] shrink-0 items-center justify-center rounded-full', className)}>
      {children}
    </button>
  );
}

function SideRail() {
  const [shown, setShown] = useState('I·O');
  return (
    <aside className="flex w-[62px] shrink-0 flex-col">
      <div className="h-[92px] w-[46px] bg-[#515151]">
        <div className="flex h-full w-[62px] flex-col gap-2 rounded-bl-md bg-[#767676] pl-2">
          <RoundButton label="Arrangement view" className="bg-[#515151]">
            <svg viewBox="0 0 22 20" className="h-5 w-[22px]" fill="#f8cb46">
              <path d="M0 0h22v4H0zM0 8h22v4H0zM0 16h22v4H0z" />
            </svg>
          </RoundButton>
          <RoundButton label="Session view" className="bg-[#515151]">
            <svg viewBox="0 0 20 22" className="h-[22px] w-5" fill="#999999">
              <path d="M0 0h4v22H0zM8 0h4v22H8zM16 0h4v22h-4z" />
            </svg>
          </RoundButton>
        </div>
      </div>
      <div className="flex w-[46px] flex-1 flex-col items-center rounded-tr-lg rounded-br-lg bg-[#515151] pt-[146px] pr-2 pb-[52px]">
        <div className="w-3.5 flex-1 rounded-full bg-[#383838]" />
        <div className="mt-[204px] flex flex-col gap-3">
          {['I·O', 'R', 'M', 'D'].map((s) => (
            <button
              key={s}
              onClick={() => setShown(s)}
              className={clsx(
                'size-[26px] rounded-full text-center text-[13px] leading-[26px] font-medium',
                shown === s ? 'bg-[#f8cb46] text-[#333333]' : 'bg-[#1a2024] text-[#6a6a6a]',
              )}
            >
              {s}
            </button>
          ))}
        </div>
      </div>
    </aside>
  );
}

export default function App() {
  return (
    <div className="flex min-h-screen flex-col bg-[#767676] font-[Inter,sans-serif] text-black">
      <Toolbar />
      <main className="flex flex-1">
        <div className="flex w-[62px] shrink-0 flex-col justify-between pl-4">
          <RoundButton label="Show browser" className="bg-[#5c5c5c]">
            <svg viewBox="0 0 22 22" className="size-[22px]" fill="#8d8d8d">
              <path d="M1 0h20l1 2-10 20h-2L0 2z" />
            </svg>
          </RoundButton>
          <RoundButton label="Groove pool" className="bg-[#5c5c5c]">
            <svg viewBox="0 0 24 18" className="h-[18px] w-6" fill="none" stroke="#8d8d8d" strokeWidth={2}>
              <path d="M1 6c4-6 8-5 11-2s7 4 11-2M1 15c4-6 8-5 11-2s7 4 11-2" />
            </svg>
          </RoundButton>
        </div>
        <div className="min-w-0 flex-1 rounded-l-lg rounded-tr-lg bg-[#515151] pt-2 pl-2">
          <Overview />
          <div className="pr-2">
            <Arrangement />
            <div className="pr-[422px]">
              <TimeRuler />
            </div>
          </div>
        </div>
        <SideRail />
      </main>
    </div>
  );
}
